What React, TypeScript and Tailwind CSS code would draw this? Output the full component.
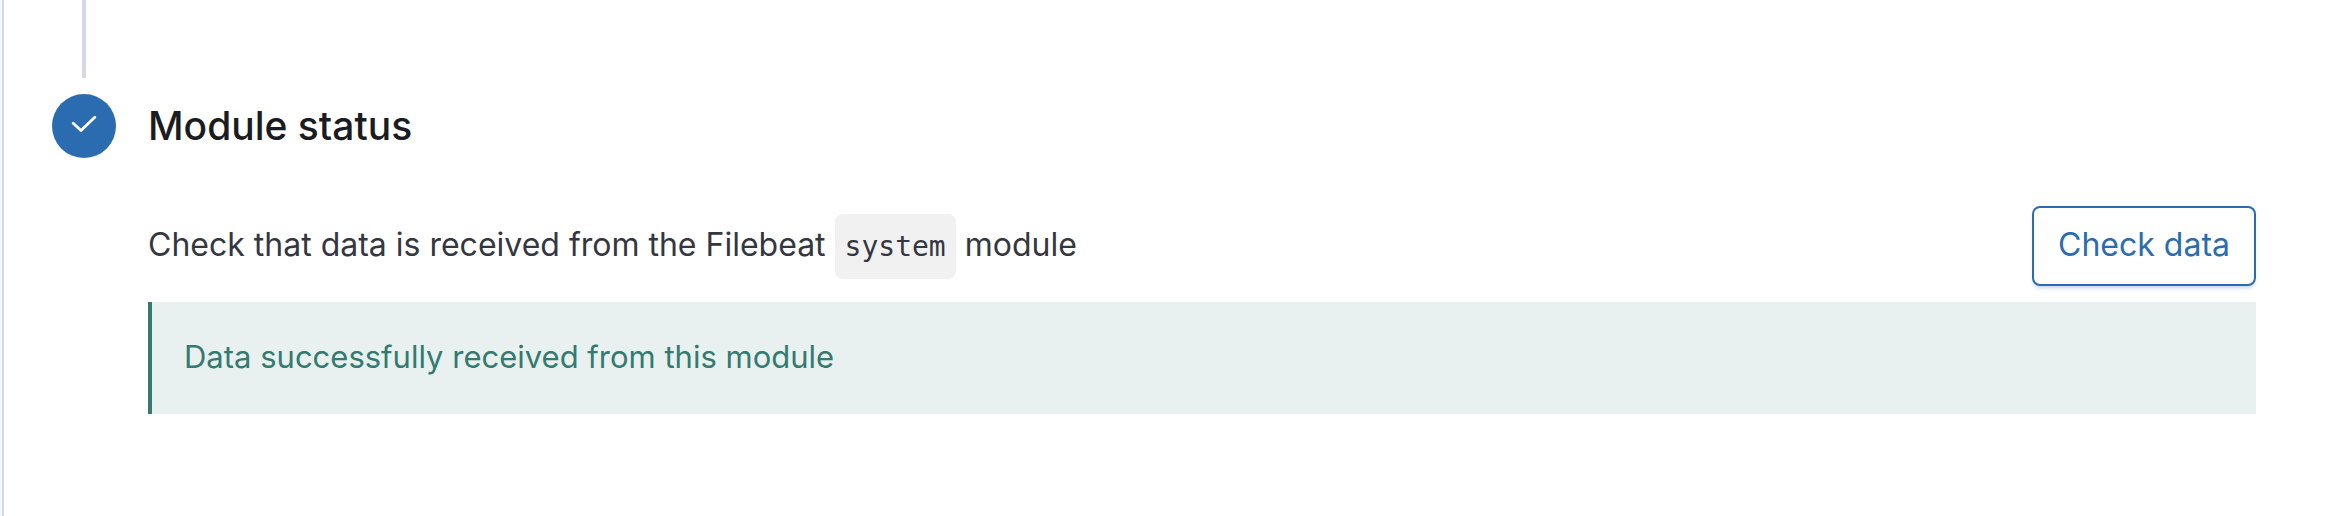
function StepCheck() {
  return (
    <span className="flex size-16 items-center justify-center rounded-full bg-[#2b6cb0]">
      <svg
        role="img"
        aria-label="Step complete"
        viewBox="0 0 32 32"
        className="size-8"
        fill="none"
        stroke="#fff"
        strokeWidth="2.8"
        strokeLinecap="round"
        strokeLinejoin="round"
      >
        <path d="M5.2 13.2 L13 20.6 L26.8 7.2" />
      </svg>
    </span>
  );
}

function Callout({ title }: { title: string }) {
  return (
    <div
      role="status"
      className="mt-4 border-l-4 border-[#347a70] bg-[#e8f1ef] px-8 pt-[31px] pb-[33px] text-[31px] leading-[48px] text-[#347a70]"
    >
      {title}
    </div>
  );
}

export default function App() {
  return (
    <div className="min-h-screen bg-[#f5f7fa] pl-0.5 font-[Inter,sans-serif]">
      <main className="flex min-h-screen flex-col border-l-2 border-[#d3dae6] bg-white pr-20 pl-12">
        <div className="flex w-16 justify-center">
          <div className="h-[78px] w-1 bg-[#d3dae6]" />
        </div>
        <section className="flex gap-8 pt-4">
          <StepCheck />
          <div className="min-w-0 flex-1">
            <h2 className="text-[39px] leading-[64px] font-medium text-[#1a1c21]">Module status</h2>
            <div className="mt-12 flex items-center justify-between gap-8">
              <p className="text-[32px] leading-[48px] text-[#343741]">
                Check that data is received from the Filebeat{" "}
                <code className="rounded-lg bg-[#f1f1f1] px-2.5 py-4 font-['DejaVu_Sans_Mono',monospace] text-[28px]">
                  system
                </code>{" "}
                module
              </p>
              <button
                type="button"
                className="h-20 shrink-0 rounded-lg border-2 border-[#2b6cb0] bg-white px-6 pb-0.5 text-[32px] leading-[48px] text-[#2b6cb0] shadow-[0_4px_4px_-2px_rgba(43,108,176,0.3)]"
              >
                Check data
              </button>
            </div>
            <Callout title="Data successfully received from this module" />
          </div>
        </section>
      </main>
    </div>
  );
}
